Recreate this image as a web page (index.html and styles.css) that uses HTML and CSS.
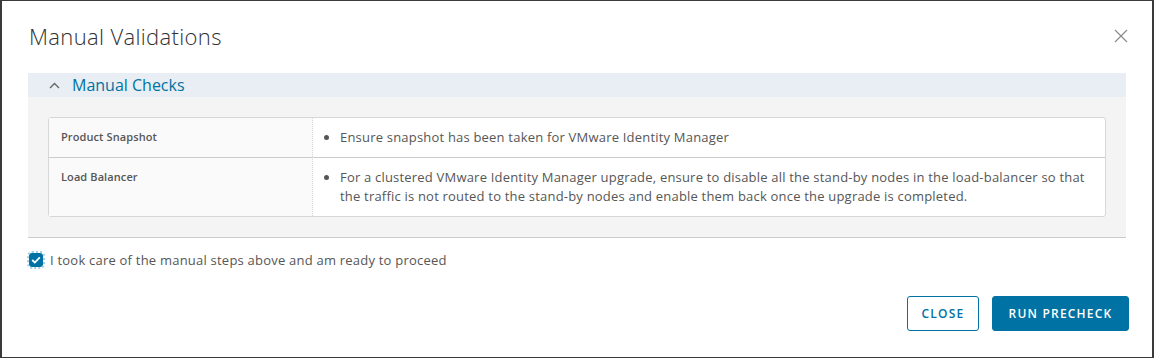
FILE: index.html
```html
<!DOCTYPE html>
<html lang="en">
  <head>
    <meta charset="UTF-8" />
    <meta name="viewport" content="width=device-width, initial-scale=1.0" />
    <title>Manual Validations</title>
    <link rel="stylesheet" href="styles.css">
  </head>
  <body>
    <div class="modal">
      <header class="modal-header">
        <h1>Manual Validations</h1>
        <button class="close-x" aria-label="Close">
          <svg width="14" height="14" viewBox="0 0 14 14">
            <path d="M1 1 L13 13 M13 1 L1 13" stroke="#8c8c8c" stroke-width="1.2" fill="none" />
          </svg>
        </button>
      </header>

      <section class="accordion">
        <div class="accordion-title">
          <svg class="chevron" width="11" height="7" viewBox="0 0 11 7">
            <path d="M1 6 L5.5 1.5 L10 6" stroke="#666" stroke-width="1.4" fill="none" />
          </svg>
          <span>Manual Checks</span>
        </div>
        <div class="accordion-body">
          <table class="checks">
            <tr>
              <th>Product Snapshot</th>
              <td>
                <ul>
                  <li>Ensure snapshot has been taken for VMware Identity Manager</li>
                </ul>
              </td>
            </tr>
            <tr>
              <th>Load Balancer</th>
              <td>
                <ul>
                  <li>For a clustered VMware Identity Manager upgrade, ensure to disable all the stand-by nodes in the load-balancer so that the traffic is not routed to the stand-by nodes and enable them back once the upgrade is completed.</li>
                </ul>
              </td>
            </tr>
          </table>
        </div>
      </section>

      <label class="confirm">
        <span class="box">
          <svg width="10" height="8" viewBox="0 0 10 8">
            <path d="M1.2 4 L3.8 6.5 L8.8 1.3" stroke="#fff" stroke-width="1.8" fill="none" />
          </svg>
        </span>
        I took care of the manual steps above and am ready to proceed
      </label>

      <footer class="actions">
        <button class="btn btn-outline">Close</button>
        <button class="btn btn-primary">Run Precheck</button>
      </footer>
    </div>
  </body>
</html>
```

FILE: styles.css
```css
body {
  margin: 0;
  background-color: #ffffff;
  font-family: "Open Sans", "Lato", sans-serif;
}

.modal {
  box-sizing: border-box;
  width: 1154px;
  height: 358px;
  border: 1px solid #3a3a3a;
  border-left-width: 2px;
  border-right-width: 2px;
  padding: 0 26px 0 26px;
  background-color: #fff;
}

.modal-header {
  display: flex;
  justify-content: space-between;
  align-items: center;
  padding-top: 20px;
  height: 50px;
  box-sizing: border-box;
}

h1 {
  margin: 0 0 0 1px;
  font-size: 22px;
  font-weight: 300;
  letter-spacing: 0.35px;
  color: #313131;
}

.close-x {
  border: 0;
  background: none;
  padding: 0;
  margin-right: -2px;
  margin-top: 0;
  display: flex;
}

.accordion {
  margin-top: 22px;
  border-bottom: 1px solid #cccccc;
}

.accordion-title {
  display: flex;
  align-items: center;
  gap: 12px;
  height: 24px;
  padding-left: 21px;
  background-color: #e8eef3;
  color: #0072a3;
  font-size: 16px;
}

.accordion-body {
  background-color: #f4f4f4;
  padding: 20px 20px 20px 20px;
}

.checks {
  width: 100%;
  border-collapse: separate;
  border-spacing: 0;
  border: 1px solid #d7d7d7;
  border-radius: 3px;
  background-color: #fff;
  font-size: 13px;
  letter-spacing: 0.2px;
  color: #565656;
}

.checks th {
  width: 239px;
  text-align: left;
  vertical-align: top;
  font-size: 11px;
  font-weight: 600;
  letter-spacing: 0.1px;
  line-height: 19px;
  color: #565656;
  background-color: #fafafa;
  padding: 9px 12px;
  border-right: 1px dotted #d7d7d7;
}

.checks td {
  vertical-align: top;
  padding: 10px 12px 10px 14px;
  line-height: 19px;
}

.checks tr + tr th,
.checks tr + tr td {
  border-top: 1px solid #cccccc;
}

.checks ul {
  margin: 0;
  padding-left: 13px;
}

.confirm {
  display: flex;
  align-items: center;
  gap: 7px;
  margin-top: 15px;
  margin-left: 1px;
  font-size: 13px;
  letter-spacing: 0.22px;
  line-height: 14px;
  color: #565656;
}

.box {
  width: 14px;
  height: 14px;
  border-radius: 3px;
  background-color: #0072a3;
  display: flex;
  align-items: center;
  justify-content: center;
  outline: 2px dotted #a6d0e6;
  outline-offset: 0;
}

.actions {
  display: flex;
  justify-content: flex-end;
  gap: 13px;
  margin-top: 29px;
  margin-right: -3px;
}

.btn {
  height: 35px;
  border-radius: 3px;
  font-family: inherit;
  font-size: 12px;
  font-weight: 600;
  letter-spacing: 1.2px;
  text-transform: uppercase;
  padding: 0 10px;
}

.btn-outline {
  width: 72px;
  background-color: #fff;
  border: 1px solid #0072a3;
  color: #0072a3;
}

.btn-primary {
  width: 137px;
  background-color: #0072a3;
  border: 1px solid #0072a3;
  color: #fff;
}
```
